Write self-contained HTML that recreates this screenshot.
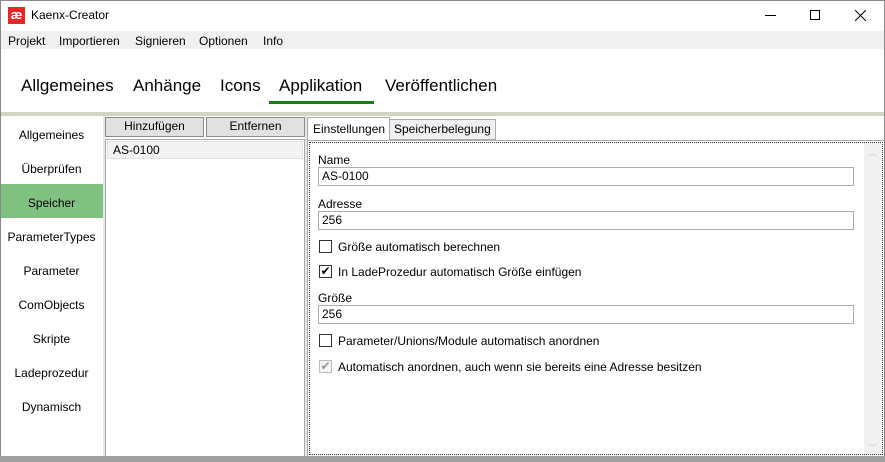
<!DOCTYPE html>
<html><head><meta charset="utf-8"><style>
*{margin:0;padding:0;box-sizing:border-box}
body{width:885px;height:462px;overflow:hidden;background:#fff;font-family:"Liberation Sans",sans-serif;font-size:12px;color:#000;position:relative}
.a{position:absolute;white-space:nowrap}
.tb{border:1px solid #abadb3;background:#fff;height:19px;padding:1px 3px;font-size:12px;line-height:15px}
.cb{width:13px;height:13px;border:1px solid #333;background:#fff}
.nav{left:0;width:103px;text-align:center;font-size:12px}
.top{font-size:17px;top:76px}
</style></head><body>
<div class="a" style="left:0;top:0;width:885px;height:462px;border:1px solid #888;border-bottom:none"></div>
<div class="a" style="left:8px;top:7px;width:17px;height:17px;background:#e62828;color:#fff;font-size:13px;line-height:16px;text-align:center;font-weight:bold">æ</div>
<div class="a" style="left:31px;top:8px;font-size:12px">Kaenx-Creator</div>
<div class="a" style="left:765px;top:15px;width:11px;height:1px;background:#000"></div>
<div class="a" style="left:810px;top:10px;width:10px;height:10px;border:1px solid #000"></div>
<svg class="a" style="left:855px;top:10px" width="11" height="11"><path d="M0 0L11 11M11 0L0 11" stroke="#000" stroke-width="1"/></svg>
<div class="a" style="left:1px;top:31px;width:883px;height:18px;background:#f0f0f0"></div>
<div class="a" style="left:8px;top:34px">Projekt</div>
<div class="a" style="left:59px;top:34px">Importieren</div>
<div class="a" style="left:135px;top:34px">Signieren</div>
<div class="a" style="left:199px;top:34px">Optionen</div>
<div class="a" style="left:263px;top:34px">Info</div>
<div class="a top" style="left:21px">Allgemeines</div>
<div class="a top" style="left:133px">Anhänge</div>
<div class="a top" style="left:220px">Icons</div>
<div class="a top" style="left:279px">Applikation</div>
<div class="a top" style="left:385px">Veröffentlichen</div>
<div class="a" style="left:269px;top:101px;width:105px;height:3px;background:#108010"></div>
<div class="a" style="left:1px;top:112px;width:883px;height:4px;background:#d4d4c4"></div>
<div class="a" style="left:103px;top:116px;width:2px;height:340px;background:#e6e6e6"></div>
<div class="a" style="left:1px;top:184px;width:102px;height:34px;background:#80c080"></div>
<div class="a nav" style="top:128px">Allgemeines</div>
<div class="a nav" style="top:162px">Überprüfen</div>
<div class="a nav" style="top:196px">Speicher</div>
<div class="a nav" style="top:230px">ParameterTypes</div>
<div class="a nav" style="top:264px">Parameter</div>
<div class="a nav" style="top:298px">ComObjects</div>
<div class="a nav" style="top:332px">Skripte</div>
<div class="a nav" style="top:366px">Ladeprozedur</div>
<div class="a nav" style="top:400px">Dynamisch</div>
<div class="a" style="left:105px;top:117px;width:99px;height:20px;background:#e1e1e1;border:1px solid #8a8a8a;text-align:center;line-height:17px">Hinzufügen</div>
<div class="a" style="left:206px;top:117px;width:99px;height:20px;background:#e1e1e1;border:1px solid #8a8a8a;text-align:center;line-height:17px">Entfernen</div>
<div class="a" style="left:105px;top:139px;width:200px;height:318px;border:1px solid #ababab;background:#fff"></div>
<div class="a" style="left:107px;top:141px;width:196px;height:18px;background:#f3f3f3;border:1px solid #e2e2e2;padding-left:5px;line-height:16px">AS-0100</div>
<div class="a" style="left:305px;top:116px;width:2px;height:341px;background:#e6e6e6"></div>
<div class="a" style="left:389px;top:119px;width:107px;height:21px;background:#f0f0f0;border:1px solid #acacac;padding-left:4px;line-height:19px">Speicherbelegung</div>
<div class="a" style="left:307px;top:117px;width:83px;height:24px;background:#fff;border:1px solid #acacac;border-bottom:none;padding-left:5px;line-height:23px">Einstellungen</div>
<div class="a" style="left:307px;top:140px;width:577px;height:317px;border:1px solid #acacac;border-right:none;border-bottom:none"></div>
<div class="a" style="left:309px;top:142px;width:574px;height:313px;border:1px dotted #333"></div>
<div class="a" style="left:864px;top:143px;width:17px;height:311px;background:#f0f0f0"></div>
<div class="a" style="left:868px;top:146px;color:#ccc;font-size:9px">︿</div>
<div class="a" style="left:868px;top:441px;color:#ccc;font-size:9px">﹀</div>
<div class="a" style="left:318px;top:153px">Name</div>
<div class="a tb" style="left:318px;top:167px;width:536px">AS-0100</div>
<div class="a" style="left:318px;top:197px">Adresse</div>
<div class="a tb" style="left:318px;top:211px;width:536px">256</div>
<div class="a cb" style="left:319px;top:240px"></div>
<div class="a" style="left:338px;top:240px">Größe automatisch berechnen</div>
<div class="a cb" style="left:319px;top:265px;font-size:12px;line-height:11px;text-align:center">✔</div>
<div class="a" style="left:338px;top:265px">In LadeProzedur automatisch Größe einfügen</div>
<div class="a" style="left:318px;top:291px">Größe</div>
<div class="a tb" style="left:318px;top:305px;width:536px">256</div>
<div class="a cb" style="left:319px;top:334px"></div>
<div class="a" style="left:338px;top:334px">Parameter/Unions/Module automatisch anordnen</div>
<div class="a cb" style="left:319px;top:360px;border-color:#bcbcbc;background:#f4f4f4;color:#999;font-size:12px;line-height:11px;text-align:center">✔</div>
<div class="a" style="left:338px;top:360px">Automatisch anordnen, auch wenn sie bereits eine Adresse besitzen</div>
<div class="a" style="left:0;top:456px;width:885px;height:6px;background:#a0a0a0"></div>
</body></html>
